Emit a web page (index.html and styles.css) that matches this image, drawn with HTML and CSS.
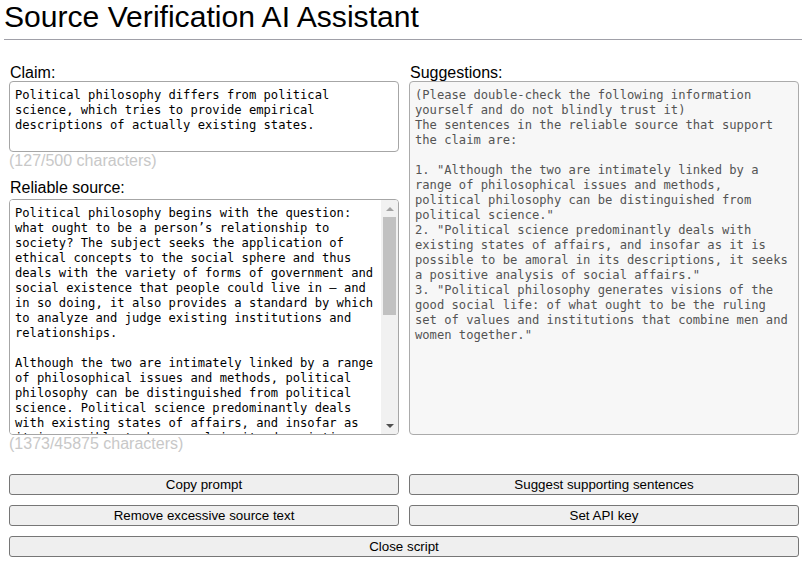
FILE: index.html
```html
<!DOCTYPE html>
<html lang="en">
<head>
    <meta charset="UTF-8">
    <meta name="viewport" content="width=device-width, initial-scale=1.0">
    <title>Source Verification AI Assistant</title>
    <link rel="stylesheet" href="styles.css">
</head>
<body>
    <header>
        <h1>Source Verification AI Assistant</h1>
        <hr>
    </header>

    <main class="columns">
        <div class="column">
            <label for="claim">Claim:</label>
            <textarea id="claim" class="claim-box">Political philosophy differs from political science, which tries to provide empirical descriptions of actually existing states.</textarea>
            <div class="counter">(127/500 characters)</div>

            <label for="source" class="second-label">Reliable source:</label>
            <div class="source-wrap">
                <textarea id="source" class="source-box">Political philosophy begins with the question: what ought to be a person’s relationship to society? The subject seeks the application of ethical concepts to the social sphere and thus deals with the variety of forms of government and social existence that people could live in – and in so doing, it also provides a standard by which to analyze and judge existing institutions and relationships.

Although the two are intimately linked by a range of philosophical issues and methods, political philosophy can be distinguished from political science. Political science predominantly deals with existing states of affairs, and insofar as it is possible to be amoral in its descriptions, it seeks a positive analysis of social affairs. Political philosophy generates visions of the good social life: of what ought to be the ruling set of values and institutions that combine men and women together.

The field of political philosophy is enormous and always open to debate, but its main concerns have remained remarkably constant over the centuries. Questions about justice, liberty, authority and the proper scope of state power recur in the writings of Plato and Aristotle as well as in those of modern thinkers such as Hobbes, Locke, Rousseau and Mill. Each generation reformulates these questions in the light of its own circumstances, yet the answers continue to shape the institutions under which people live.</textarea>
                
                <div class="scrollbar">
                    <div class="scroll-btn"><span class="arrow-up"></span></div>
                    <div class="scroll-track"><div class="scroll-thumb"></div></div>
                    <div class="scroll-btn"><span class="arrow-down"></span></div>
                </div>
            </div>
            <div class="counter">(1373/45875 characters)</div>
        </div>

        <div class="column">
            <label for="suggestions">Suggestions:</label>
            <textarea id="suggestions" class="suggestions-box" readonly>(Please double-check the following information yourself and do not blindly trust it)
The sentences in the reliable source that support the claim are:

1. "Although the two are intimately linked by a range of philosophical issues and methods, political philosophy can be distinguished from political science."
2. "Political science predominantly deals with existing states of affairs, and insofar as it is possible to be amoral in its descriptions, it seeks a positive analysis of social affairs."
3. "Political philosophy generates visions of the good social life: of what ought to be the ruling set of values and institutions that combine men and women together."</textarea>
        </div>
    </main>

    <div class="actions">
        <button>Copy prompt</button>
        <button>Suggest supporting sentences</button>
        <button>Remove excessive source text</button>
        <button>Set API key</button>
        <button class="wide">Close script</button>
    </div>
</body>
</html>
```

FILE: styles.css
```css
body {
    margin: 0;
    font-family: "Liberation Sans", Arial, sans-serif;
    color: #000;
    background: #fff;
}

header {
    padding: 0 4px;
}

h1 {
    margin: 0;
    font-size: 30.1px;
    font-weight: normal;
    line-height: 34px;
}

hr {
    margin: 5px 0 0 0;
    border: none;
    height: 1px;
    background: #a0a0a8;
}

.columns {
    display: grid;
    grid-template-columns: 390px 390px;
    gap: 10px;
    padding: 24px 0 0 9px;
}

.column {
    display: flex;
    flex-direction: column;
}

label {
    display: block;
    font-size: 16px;
    line-height: 17px;
    padding-left: 1px;
}

.second-label {
    margin-top: 9px;
    margin-bottom: 3px;
}

textarea {
    display: block;
    box-sizing: border-box;
    width: 390px;
    margin: 0;
    padding: 6px 5px 4px 5px;
    border: 1px solid #a6a6a6;
    border-radius: 4px;
    font-family: "DejaVu Sans Mono", monospace;
    font-size: 12.15px;
    line-height: 15px;
    color: #000;
    background: #fff;
    resize: none;
    outline: none;
}

.claim-box {
    height: 71px;
}

.source-wrap {
    display: flex;
    box-sizing: border-box;
    width: 390px;
    height: 236px;
    border: 1px solid #a6a6a6;
    border-radius: 4px;
    overflow: hidden;
}

.source-wrap .source-box {
    flex: 1;
    width: auto;
    height: 100%;
    border: none;
    border-radius: 0;
    overflow: hidden;
}

.scrollbar {
    display: flex;
    flex-direction: column;
    width: 17px;
    background: #f1f1f1;
}

.scroll-btn {
    display: flex;
    align-items: center;
    justify-content: center;
    height: 17px;
}

.scroll-track {
    flex: 1;
}

.scroll-thumb {
    height: 98px;
    margin: 0 2px;
    background: #c1c1c1;
}

.arrow-up {
    width: 0;
    height: 0;
    border-left: 4px solid transparent;
    border-right: 4px solid transparent;
    border-bottom: 4px solid #a3a3a3;
}

.arrow-down {
    width: 0;
    height: 0;
    border-left: 4px solid transparent;
    border-right: 4px solid transparent;
    border-top: 4px solid #505050;
}

.suggestions-box {
    height: 354px;
    color: #545454;
    background: #f7f7f7;
    border-color: #ababab;
}

.counter {
    font-size: 16px;
    line-height: 18px;
    color: #c8c8c8;
}

.actions {
    display: grid;
    grid-template-columns: 390px 390px;
    gap: 10px;
    padding: 21px 0 0 9px;
}

button {
    height: 21px;
    margin: 0;
    padding: 0;
    font-family: "Liberation Sans", Arial, sans-serif;
    font-size: 13.33px;
    color: #000;
    background: #efefef;
    border: 1px solid #767676;
    border-radius: 3px;
}

.wide {
    grid-column: span 2;
}
```
